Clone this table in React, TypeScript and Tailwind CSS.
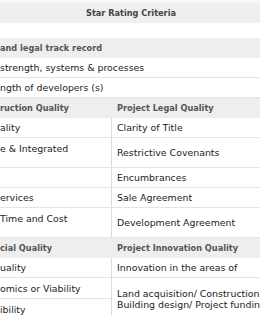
const body = "text-[9.4px] leading-[11px] text-[#222]";
const head = "text-[8.2px] leading-[11px] font-bold text-[#555]";

type Row = { left: string; right: string; tall?: boolean };

const Cell = ({ left, right, tall }: Row) => (
  <div className={`grid grid-cols-[112px_1fr] border-b border-[#e4e4e4] ${tall ? "h-[30px]" : "h-[20px]"}`}>
    <div className={`flex border-r border-[#dcdcdc] whitespace-nowrap overflow-hidden ${tall ? "items-start pt-[5px]" : "items-center"}`}>
      <span className={body}>{left}</span>
    </div>
    <div className="flex items-center pl-[5px] whitespace-nowrap">
      <span className={body}>{right}</span>
    </div>
  </div>
);

const Header = ({ left, right }: { left: string; right: string }) => (
  <div className="grid grid-cols-[112px_1fr] h-[20px] pt-[1px] bg-[#eeeeee]">
    <div className="flex items-center whitespace-nowrap overflow-hidden">
      <span className={head}>{left}</span>
    </div>
    <div className="flex items-center pl-[5px] whitespace-nowrap">
      <span className={head}>{right}</span>
    </div>
  </div>
);

export default function App() {
  return (
    <div
      className="w-[260px] h-[315px] overflow-hidden bg-white"
      style={{ fontFamily: '"DejaVu Sans", Verdana, sans-serif' }}
    >
      <div className="w-[300px]">
        {/* title */}
        <div className="h-[3px] bg-[#f8f8f8]" />
        <div className="h-[20px] w-[262px] flex items-center justify-center bg-[#efefef]">
          <span className="text-[8.2px] font-bold text-[#444]">Star Rating Criteria</span>
        </div>
        <div className="h-[15px]" />

        {/* developer section */}
        <div className="h-[20px] pt-[1px] flex items-center bg-[#eeeeee] whitespace-nowrap">
          <span className={head}>and legal track record</span>
        </div>
        <div className="h-[20px] flex items-center border-b border-[#e4e4e4] whitespace-nowrap">
          <span className={body}>strength, systems &amp; processes</span>
        </div>
        <div className="h-[20px] flex items-center border-b border-[#e4e4e4] whitespace-nowrap">
          <span className={body}>ngth of developers (s)</span>
        </div>

        {/* construction / legal */}
        <Header left="ruction Quality" right="Project Legal Quality" />
        <Cell left="ality" right="Clarity of Title" />
        <Cell left="e & Integrated" right="Restrictive Covenants" tall />
        <Cell left="" right="Encumbrances" />
        <Cell left="ervices" right="Sale Agreement" />
        <Cell left="  Time and Cost" right="Development Agreement" tall />

        {/* financial / innovation */}
        <Header left="cial Quality" right="Project Innovation Quality" />
        <Cell left="uality" right="Innovation in the areas of" />
        <div className="grid grid-cols-[112px_1fr]">
          <div className="flex flex-col border-r border-[#dcdcdc]">
            <div className="h-[21px] flex items-center border-b border-[#e4e4e4] whitespace-nowrap overflow-hidden">
              <span className={body}>omics or Viability</span>
            </div>
            <div className="h-[20px] flex items-center whitespace-nowrap overflow-hidden">
              <span className={body}>ibility</span>
            </div>
          </div>
          <div className="flex flex-col justify-center pl-[5px] whitespace-nowrap">
            <span className={body}>Land acquisition/ Construction</span>
            <span className={body}>Building design/ Project funding</span>
          </div>
        </div>
      </div>
    </div>
  );
}
